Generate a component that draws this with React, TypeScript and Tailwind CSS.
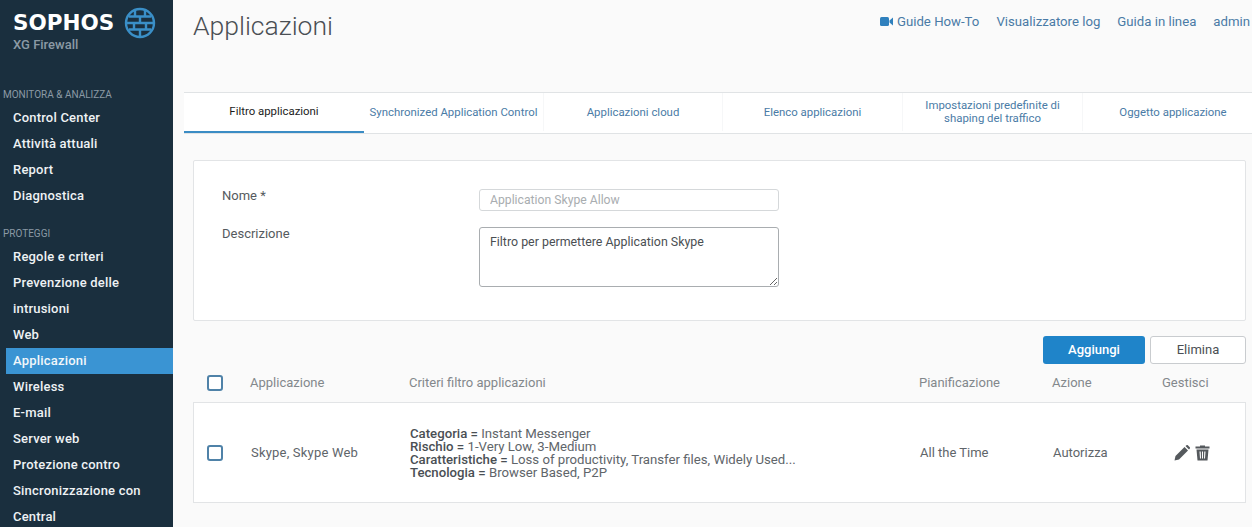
const font = "font-['Roboto','Noto_Sans',sans-serif]";

function Logo() {
  return (
    <svg width="32" height="32" viewBox="0 0 32 32" fill="none" stroke="#3a8fc7" strokeWidth="2.4">
      <circle cx="16" cy="16" r="14" />
      <path d="M5 9.5h22M2 16h28M5 22.5h22M11 3.5v6M21 3.5v6M16 9.5v6.5M10 16v6.500M22 16v6.500M16 22.500v7" />
    </svg>
  );
}

function PencilIcon() {
  return (
    <svg width="16" height="16" viewBox="0 0 16 16" fill="#55595d">
      <path d="M0.500 15.500 1.500 11 10.500 2 14 5.500 5 14.500z" />
      <path d="M11.500 1 12.500 0.200a1 1 0 0 1 1.300 0l2 2a1 1 0 0 1 0 1.300L15 4.500z" />
    </svg>
  );
}

function TrashIcon() {
  return (
    <svg width="15" height="16" viewBox="0 0 15 16" fill="#55595d">
      <path d="M0.500 1.500h4.500V0.500h5v1h4.500v2h-14z" />
      <path fillRule="evenodd" d="M1.500 4.500h12l-1 11h-10zM4.500 6.500l0.500 7h1l-0.300-7zM7 6.500v7h1v-7zM9.300 6.500 9 13.500h1l0.500-7z" />
    </svg>
  );
}

function NavItem({ label, active }: { label: string; active?: boolean }) {
  return (
    <div className={active ? "h-[26px] ml-[6px] pl-[7px] bg-[#3a94d3] text-[13px] leading-[26px] font-medium tracking-[0.2px] text-[#f2f7fa]" : "h-[26px] pl-[13px] text-[13px] leading-[26px] font-medium tracking-[0.2px] text-[#eef2f4]"}>
      {label}
    </div>
  );
}

function Sidebar() {
  return (
    <aside className="w-[173px] shrink-0 h-[527px] overflow-hidden bg-[#1a2f3e]">
      <div className="flex items-start pl-[13px] h-[86px]">
        <div>
          <div className="mt-[10px] font-['DejaVu_Sans',sans-serif] text-[21.500px] leading-[26px] font-bold text-white">SOPHOS</div>
          <div className="mt-[2px] text-[13px] leading-[14px] font-medium text-[#8b9aa5]">XG Firewall</div>
        </div>
        <div className="ml-[10px] mt-[7px]">
          <Logo />
        </div>
      </div>
      <div className="pl-[3px] h-[18px] text-[10px] leading-[18px] text-[#8b9aa5]">MONITORA &amp; ANALIZZA</div>
      <div className="mt-[1px]">
        <NavItem label="Control Center" />
        <NavItem label="Attività attuali" />
        <NavItem label="Report" />
        <NavItem label="Diagnostica" />
      </div>
      <div className="pl-[3px] mt-[16px] h-[18px] text-[10px] leading-[18px] text-[#8b9aa5]">PROTEGGI</div>
      <div className="mt-[1px]">
        <NavItem label="Regole e criteri" />
        <NavItem label="Prevenzione delle" />
        <NavItem label="intrusioni" />
        <NavItem label="Web" />
        <NavItem label="Applicazioni" active />
        <NavItem label="Wireless" />
        <NavItem label="E-mail" />
        <NavItem label="Server web" />
        <NavItem label="Protezione contro" />
        <NavItem label="Sincronizzazione con" />
        <NavItem label="Central" />
      </div>
    </aside>
  );
}

const tabs = [
  { label: "Synchronized Application Control", w: "w-[180px]" },
  { label: "Applicazioni cloud", w: "w-[179px]" },
  { label: "Elenco applicazioni", w: "w-[180px]" },
  { label: "Impostazioni predefinite di shaping del traffico", w: "w-[180px]" },
  { label: "Oggetto applicazione", w: "w-[180px]" },
];

function Tabs() {
  return (
    <div className="ml-[11px] mt-[54px] h-[42px] flex overflow-hidden bg-white border-y border-[#e0e3e5]">
      <div className="w-[180px] shrink-0 h-[40px] border-b-2 border-[#3a8cc4] text-center text-[11.400px] leading-[37px] text-[#1c1c1c]">
        Filtro applicazioni
      </div>
      {tabs.map((t) => (
        <div key={t.label} className={`${t.w} shrink-0 h-[38px] px-[5px] flex items-center justify-center text-center text-[11.400px] leading-[13px] text-[#4a7ba6] border-r border-[#f6f7f8] last:border-r-0`}>
          {t.label}
        </div>
      ))}
    </div>
  );
}

function Checkbox() {
  return <div className="w-[16px] h-[16px] rounded-[3px] border-2 border-[#4f82a8] bg-white" />;
}

export default function App() {
  return (
    <div className={`${font} flex w-[1252px] h-[527px] overflow-hidden bg-[#fafafa]`}>
      <Sidebar />
      <main className="flex-1 min-w-0">
        <div className="flex h-[38px] pl-[20px]">
          <h1 className="mt-[9px] text-[26.500px] leading-[34px] font-light text-[#4a4f54]">Applicazioni</h1>
          <nav className="ml-auto mr-[2px] pt-[14px] flex items-start gap-[17px] whitespace-nowrap text-[13.200px] leading-[15px] text-[#4a7ba6]">
            <span className="flex items-center gap-[4px]">
              <svg width="13" height="9" viewBox="0 0 13 9" fill="#2f80bd">
                <rect x="0" y="0" width="9" height="9" rx="1.500" />
                <path d="M9.500 3.500 13 0.500v8L9.500 5.500z" />
              </svg>
              Guide How-To
            </span>
            <span>Visualizzatore log</span>
            <span>Guida in linea</span>
            <span>admin</span>
          </nav>
        </div>
        <Tabs />

        <section className="ml-[20px] mr-[6px] mt-[26px] h-[161px] bg-white border border-[#e2e4e6] rounded-[2px] pl-[28px]">
          <div className="flex pt-[26px] h-[66px]">
            <label className="w-[257px] text-[13px] leading-[18px] text-[#555a5e]">Nome *</label>
            <input
              readOnly
              value="Application Skype Allow"
              className="mt-[2px] w-[300px] h-[22px] px-[10px] border border-[#d5d8da] rounded-[3px] text-[12.200px] leading-[20px] text-[#a9adb0] outline-none"
            />
          </div>
          <div className="flex">
            <label className="-mt-[2px] w-[257px] text-[13px] leading-[18px] text-[#555a5e]">Descrizione</label>
            <textarea
              readOnly
              value="Filtro per permettere Application Skype"
              className="w-[300px] h-[60px] px-[10px] pt-[6px] border border-[#a9adb0] rounded-[3px] text-[12.400px] leading-[16px] text-[#4b4f53] outline-none"
            />
          </div>
        </section>

        <div className="flex justify-end gap-[5px] mr-[6px] mt-[15px]">
          <button className="w-[102px] h-[28px] rounded-[3px] bg-[#1f84c9] text-[13px] font-medium text-white">Aggiungi</button>
          <button className="w-[96px] h-[28px] rounded-[3px] bg-white border border-[#c9cccf] text-[13px] text-[#4a4f54]">Elimina</button>
        </div>

        <div className="flex items-center ml-[34px] h-[38px] text-[13px] text-[#83888c]">
          <Checkbox />
          <span className="ml-[27px] w-[159px]">Applicazione</span>
          <span className="w-[510px]">Criteri filtro applicazioni</span>
          <span className="w-[133px]">Pianificazione</span>
          <span className="w-[110px]">Azione</span>
          <span>Gestisci</span>
        </div>

        <div className="flex items-center ml-[20px] mr-[6px] h-[101px] pl-[13px] bg-white border border-[#e2e4e6] text-[13px] text-[#60656a]">
          <Checkbox />
          <span className="ml-[28px] w-[159px] tracking-[0.2px]">Skype, Skype Web</span>
          <div className="w-[510px] pt-[1px] text-[13.200px] leading-[13px]">
            <div><b className="font-medium text-[#4a4f54]">Categoria =</b> Instant Messenger</div>
            <div><b className="font-medium text-[#4a4f54]">Rischio =</b> 1-Very Low, 3-Medium</div>
            <div><b className="font-medium text-[#4a4f54]">Caratteristiche =</b> Loss of productivity, Transfer files, Widely Used...</div>
            <div><b className="font-medium text-[#4a4f54]">Tecnologia =</b> Browser Based, P2P</div>
          </div>
          <span className="w-[133px]">All the Time</span>
          <span className="w-[121px]">Autorizza</span>
          <span className="flex items-center gap-[5px]">
            <PencilIcon />
            <TrashIcon />
          </span>
        </div>
      </main>
    </div>
  );
}
